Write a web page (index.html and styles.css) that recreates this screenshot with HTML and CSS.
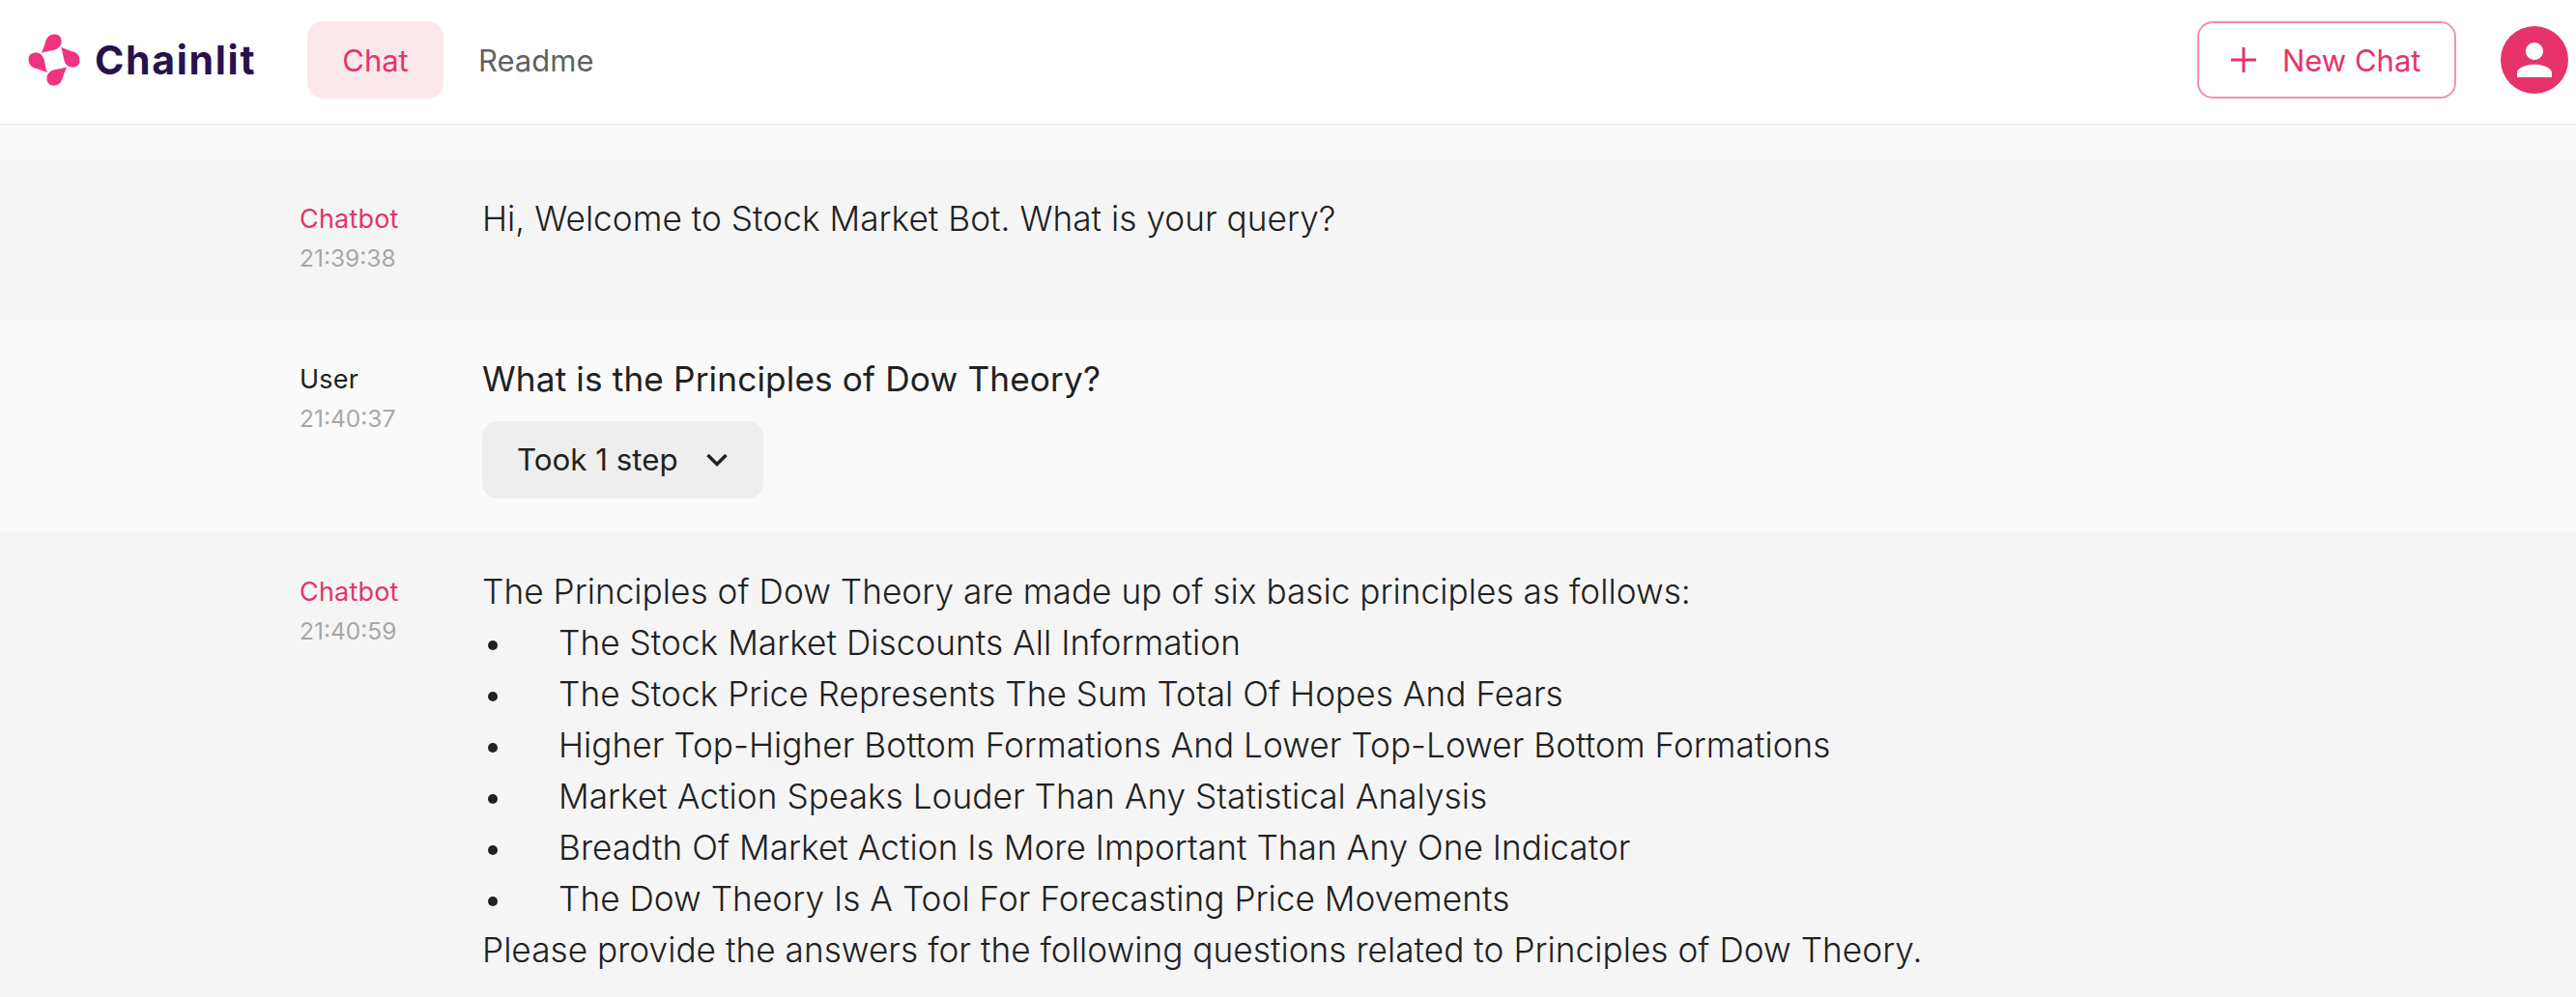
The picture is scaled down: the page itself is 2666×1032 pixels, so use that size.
FILE: index.html
```html
<!doctype html>
<html>

<head>
    <meta charset="UTF-8">
    <meta name="viewport" content="width=device-width, initial-scale=1.0">

    <link rel="stylesheet" href="styles.css">
    <title>Chainlit</title>
</head>

<body>
    <header class="header">
        <div class="logo">
            <svg class="logo-mark" viewBox="9 8 56 56" width="56" height="56">
                <path id="petal" fill="#ee3380" d="M24 29 C25 25 27 22 28 18 C29 12 33 9.500 38 9.500 C43 9.500 45 14 44.500 18 C44 22 41 25 36 26 C32 27 28 27 24 29 Z"></path>
                <use href="#petal" transform="rotate(90 37 36)" fill="#ee3370"></use>
                <use href="#petal" transform="rotate(180 37 36)" fill="#ec3358"></use>
                <use href="#petal" transform="rotate(270 37 36)" fill="#ee3370"></use>
            </svg>
            <span class="logo-text">Chainlit</span>
        </div>
        <nav class="nav">
            <a class="nav-item active">Chat</a>
            <a class="nav-item">Readme</a>
        </nav>
        <div class="header-right">
            <button class="new-chat">
                <svg viewBox="0 0 26 26" width="26" height="26">
                    <path d="M13 0v26M0 13h26" stroke="#e6336a" stroke-width="3" fill="none"></path>
                </svg>
                New Chat
            </button>
            <div class="avatar">
                <svg viewBox="0 0 24 24" width="54" height="54">
                    <path fill="#fff" d="M12 12c2.200 0 4-1.800 4-4s-1.800-4-4-4-4 1.800-4 4 1.800 4 4 4zm0 2c-2.700 0-8 1.300-8 4v2h16v-2c0-2.700-5.300-4-8-4z"></path>
                </svg>
            </div>
        </div>
    </header>

    <main class="messages">
        <section class="message bot first">
            <div class="meta">
                <div class="author">Chatbot</div>
                <div class="time">21:39:38</div>
            </div>
            <div class="content">
                <p>Hi, Welcome to Stock Market Bot. What is your query?</p>
            </div>
        </section>

        <section class="message user">
            <div class="meta">
                <div class="author">User</div>
                <div class="time">21:40:37</div>
            </div>
            <div class="content">
                <p class="question">What is the Principles of Dow Theory?</p>
                <button class="steps">
                    Took 1 step
                    <svg viewBox="0 0 22 14" width="22" height="14">
                        <path d="M1.500 2 11 11.500 20.500 2" stroke="#212121" stroke-width="3.400" fill="none"></path>
                    </svg>
                </button>
            </div>
        </section>

        <section class="message bot">
            <div class="meta">
                <div class="author">Chatbot</div>
                <div class="time">21:40:59</div>
            </div>
            <div class="content">
                <p>The Principles of Dow Theory are made up of six basic principles as follows:</p>
                <ul class="points">
                    <li>The Stock Market Discounts All Information</li>
                    <li>The Stock Price Represents The Sum Total Of Hopes And Fears</li>
                    <li>Higher Top-Higher Bottom Formations And Lower Top-Lower Bottom Formations</li>
                    <li>Market Action Speaks Louder Than Any Statistical Analysis</li>
                    <li>Breadth Of Market Action Is More Important Than Any One Indicator</li>
                    <li>The Dow Theory Is A Tool For Forecasting Price Movements</li>
                </ul>
                <p>Please provide the answers for the following questions related to Principles of Dow Theory.</p>
            </div>
        </section>
    </main>
</body>

</html>
```

FILE: styles.css
```css
* {
    box-sizing: border-box;
}

html,
body {
    height: 100%;
}

body {
    margin: 0;
    font-family: Inter, sans-serif;
    background: #fafafa;
    color: #212121;
    overflow: hidden;
}

.header {
    display: flex;
    align-items: center;
    height: 130px;
    background: #fff;
    border-bottom: 2px solid #eeeeee;
    padding: 0 8px 4px 28px;
}

.logo {
    display: flex;
    align-items: center;
    gap: 14px;
    width: 290px;
}

.logo-text {
    font-weight: 700;
    font-size: 41px;
    letter-spacing: 1.700px;
    color: #27124f;
}

.nav {
    display: flex;
}

.nav-item {
    display: flex;
    align-items: center;
    justify-content: center;
    height: 80px;
    padding: 0 36px;
    border-radius: 16px;
    font-size: 31px;
    font-weight: 400;
    color: #616161;
}

.nav-item.active {
    width: 141px;
    padding: 0;
    background: #fbe8eb;
    color: #e6336a;
}

.header-right {
    display: flex;
    align-items: center;
    gap: 46px;
    margin-left: auto;
}

.new-chat {
    display: flex;
    align-items: center;
    gap: 27px;
    height: 80px;
    width: 268px;
    padding: 0 0 0 33px;
    background: #fff;
    border: 2px solid #f093ab;
    border-radius: 16px;
    font-family: Inter, sans-serif;
    font-size: 31px;
    font-weight: 400;
    color: #e6336a;
}

.avatar {
    display: flex;
    align-items: center;
    justify-content: center;
    width: 70px;
    height: 70px;
    border-radius: 50%;
    background: #e6336a;
}

.messages {
    padding-top: 35px;
}

.message {
    display: flex;
    padding: 35px 310px 36px;
}

.message.bot {
    background: #f5f5f5;
}

.message.first {
    height: 166px;
}

.message.user {
    height: 220px;
}

.meta {
    width: 189px;
    flex-shrink: 0;
    padding-top: 9px;
}

.author {
    font-size: 27px;
    line-height: 36px;
    font-weight: 400;
    letter-spacing: 0.200px;
    color: #212121;
}

.bot .author {
    color: #e6336a;
}

.time {
    margin-top: 4px;
    font-size: 24.500px;
    line-height: 36px;
    color: #a8a8a8;
}

.content {
    font-size: 35.200px;
    line-height: 53px;
    font-weight: 300;
    letter-spacing: 0.030px;
}

.content p {
    margin: 0;
}

.content .question {
    font-weight: 400;
    letter-spacing: 0.140px;
}

.steps {
    display: flex;
    align-items: center;
    justify-content: space-between;
    width: 291px;
    height: 80px;
    margin: 17px 0 0;
    padding: 0 37px 0 36px;
    background: #eeeeee;
    border: 0;
    border-radius: 16px;
    font-family: Inter, sans-serif;
    font-size: 31.300px;
    font-weight: 400;
    color: #212121;
}

.points {
    margin: 0;
    padding: 0;
    list-style: none;
}

.points li {
    position: relative;
    padding-left: 79px;
}

.points li::before {
    content: "";
    position: absolute;
    left: 6px;
    top: 24px;
    width: 10px;
    height: 10px;
    border-radius: 50%;
    background: #212121;
}
```
